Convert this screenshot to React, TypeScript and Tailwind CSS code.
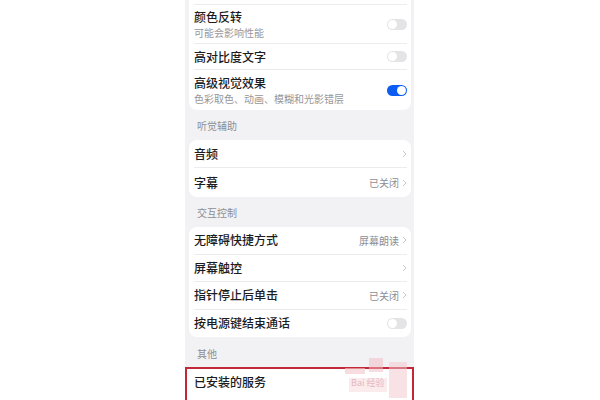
import React from 'react';

const font = { fontFamily: '"Noto Sans CJK SC", "Noto Sans", sans-serif' };

function Toggle({ on = false }: { on?: boolean }) {
  return (
    <div
      className={`w-[20px] h-[11px] rounded-full flex items-center px-[1px] ${
        on ? 'bg-[#0b5cf2] justify-end' : 'bg-[#e4e4e6] justify-start'
      }`}
    >
      <div className="w-[9px] h-[9px] rounded-full bg-white" />
    </div>
  );
}

function Chevron() {
  return (
    <svg width="5" height="8" viewBox="0 0 5 8" className="ml-[3px]">
      <path d="M1 1 L4 4 L1 7" fill="none" stroke="#c9c9cc" strokeWidth="1" />
    </svg>
  );
}

function Row({
  title,
  sub,
  value,
  right,
  h,
  last = false,
}: {
  title: string;
  sub?: string;
  value?: string;
  right: 'toggle' | 'on' | 'chevron';
  h: string;
  last?: boolean;
}) {
  return (
    <div className={`flex items-center pl-[5px] pr-[4px] ${h}`}>
      <div className={`flex-1 h-full flex items-center ${last ? '' : 'border-b border-[#ececee]'}`}>
        <div className="flex-1 flex flex-col justify-center">
          <div className="text-[12px] leading-[14px] font-medium text-[#1c1c1e]">{title}</div>
          {sub && <div className="text-[10px] leading-[13px] mt-[2px] text-[#97979b]">{sub}</div>}
        </div>
        {value && <span className="text-[10px] text-[#8e8e92]">{value}</span>}
        {right === 'chevron' && <Chevron />}
        {right === 'toggle' && <Toggle />}
        {right === 'on' && <Toggle on />}
      </div>
    </div>
  );
}

function Header({ label, pt }: { label: string; pt: string }) {
  return (
    <div className={`h-[30px] ${pt} pl-[8px] text-[10px] leading-[14px] text-[#8e8e92]`}>{label}</div>
  );
}

export default function App() {
  return (
    <div className="w-[600px] h-[400px] bg-white overflow-hidden" style={font}>
      <div className="relative w-[229px] h-[400px] ml-[185px] bg-[#f2f2f4] overflow-hidden px-[4px] pr-[3px]">
        {/* 视觉 */}
        <div className="bg-white rounded-b-lg">
          <div className="h-[5px] ml-[5px] mr-[4px] border-b border-[#ececee]" />
          <Row title="颜色反转" sub="可能会影响性能" right="toggle" h="h-[39px]" />
          <Row title="高对比度文字" right="toggle" h="h-[26px]" />
          <Row title="高级视觉效果" sub="色彩取色、动画、模糊和光影错层" right="on" h="h-[40px]" last />
        </div>

        <Header label="听觉辅助" pt="pt-[9px]" />
        <div className="bg-white rounded-lg">
          <Row title="音频" right="chevron" h="h-[28px]" />
          <Row title="字幕" value="已关闭" right="chevron" h="h-[29px]" last />
        </div>

        <Header label="交互控制" pt="pt-[9px]" />
        <div className="bg-white rounded-lg">
          <Row title="无障碍快捷方式" value="屏幕朗读" right="chevron" h="h-[27.5px]" />
          <Row title="屏幕触控" right="chevron" h="h-[27.5px]" />
          <Row title="指针停止后单击" value="已关闭" right="chevron" h="h-[27.5px]" />
          <Row title="按电源键结束通话" right="toggle" h="h-[27.5px]" last />
        </div>

        <Header label="其他" pt="pt-[10px]" />
        <div className="-mx-[4px] -mr-[3px] border-2 border-[#c3283a] bg-white h-[50px] flex items-start pt-[6px] pl-[7px]">
          <div className="text-[12px] leading-[14px] font-medium text-[#1c1c1e]">已安装的服务</div>
        </div>

        {/* watermark */}
        <div className="absolute left-[160px] top-[356px] w-[66px] h-[44px] pointer-events-none">
          <div className="absolute left-[0px] top-[12px] w-[20px] h-[6px] bg-[#f3c6cc] opacity-60" />
          <div className="absolute left-[24px] top-[2px] w-[14px] h-[14px] bg-[#f0b9c1] opacity-50" />
          <div className="absolute left-[44px] top-[6px] w-[18px] h-[36px] bg-[#f3c6cc] opacity-50" />
          <div className="absolute left-[4px] top-[22px] w-[38px] h-[14px] bg-[#f8dde1] opacity-60" />
          <div className="absolute left-[6px] top-[20px] text-[9px] text-[#d9a3ab] opacity-70">Bai 经验</div>
        </div>
      </div>
    </div>
  );
}
